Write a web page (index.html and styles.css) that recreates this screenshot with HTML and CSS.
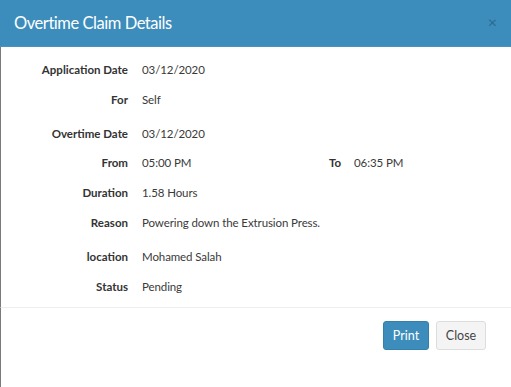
FILE: index.html
```html
<!DOCTYPE html>
<html>
<head>
<meta charset="utf-8">
<link rel="stylesheet" href="styles.css">
</head>
<body>
<div class="modal">
  <div class="modal-header">
    <h4 class="modal-title">Overtime Claim Details</h4>
    <span class="close">&times;</span>
  </div>
  <div class="modal-body">
    <div class="row"><div class="label">Application Date</div><div class="value">03/12/2020</div></div>
    <div class="row"><div class="label">For</div><div class="value">Self</div></div>
    <div class="row gap"><div class="label">Overtime Date</div><div class="value">03/12/2020</div></div>
    <div class="row short"><div class="label">From</div><div class="value half">05:00 PM</div><div class="label to">To</div><div class="value">06:35 PM</div></div>
    <div class="row"><div class="label">Duration</div><div class="value">1.58 Hours</div></div>
    <div class="row"><div class="label">Reason</div><div class="value">Powering down the Extrusion Press.</div></div>
    <div class="row gap"><div class="label">location</div><div class="value">Mohamed Salah</div></div>
    <div class="row"><div class="label">Status</div><div class="value">Pending</div></div>
  </div>
  <div class="modal-footer">
    <button class="btn btn-primary">Print</button>
    <button class="btn btn-default">Close</button>
  </div>
</div>
</body>
</html>
```

FILE: styles.css
```css
html, body {
  margin: 0;
  padding: 0;
  width: 511px;
  height: 387px;
  overflow: hidden;
  background: #ffffff;
  font-family: Lato, "Open Sans", sans-serif;
  color: #333;
}
.modal {
  display: flex;
  flex-direction: column;
  height: 387px;
}
.modal-header {
  height: 46px;
  background: #3c8dbc;
  border-bottom: 1px solid #4a93bf;
  display: flex;
  align-items: center;
  justify-content: space-between;
  padding: 0 14px 0 14px;
  flex-shrink: 0;
}
.modal-title {
  margin: 0;
  font-size: 16.5px;
  letter-spacing: -0.45px;
  font-weight: normal;
  color: #fff;
}
.close {
  color: #2d6a8f;
  font-size: 16px;
  line-height: 1;
  margin-top: -2px;
}
.modal-body {
  padding: 7px 0 6px 0;
  border-left: 1px solid #7a7a7a;
}
.row {
  display: flex;
  align-items: center;
  height: 30px;
  font-size: 11.5px;
}
.row.gap { margin-top: 4px; }
.row.short { height: 29px; }
.label {
  width: 127px;
  text-align: right;
  font-weight: bold;
  margin-right: 14px;
  color: #333;
}
.label.to {
  width: 29px;
  margin-right: 13px;
}
.value { color: #3a3a3a; letter-spacing: -0.1px; }
.value.half { width: 170px; }
.modal-footer {
  border-top: 1px solid #eeeeee;
  border-left: 1px solid #7a7a7a;
  flex: 1;
  display: flex;
  justify-content: flex-end;
  align-items: flex-start;
  padding: 13px 25px 0 0;
  gap: 7px;
}
.btn {
  height: 29px;
  font-family: inherit;
  font-size: 12.5px;
  border-radius: 3px;
  padding: 0 6px;
  cursor: pointer;
}
.btn-primary {
  background: #3c8dbc;
  border: 1px solid #367fa9;
  color: #fff;
  width: 46px;
}
.btn-default {
  background: #f4f4f4;
  border: 1px solid #dddddd;
  color: #444;
  width: 50px;
}
```
